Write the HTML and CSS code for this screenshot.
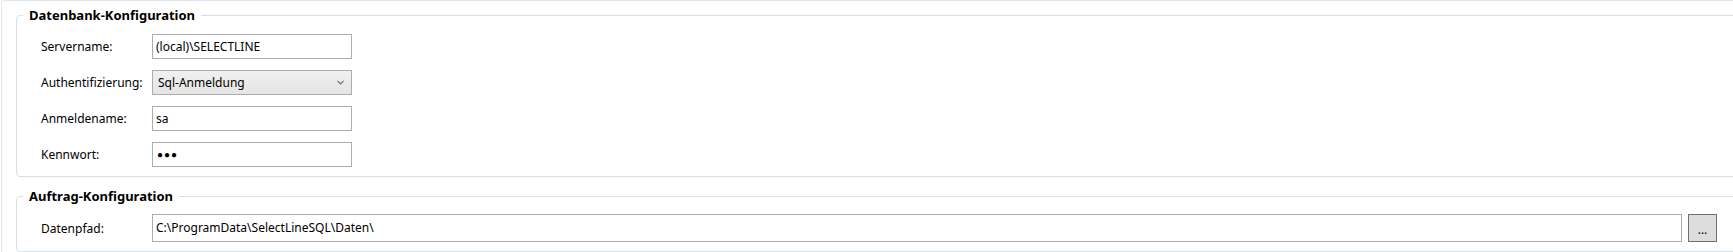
FILE: index.html
```html
<!DOCTYPE html>
<html lang="de">
<head>
    <meta charset="UTF-8">
    <title>Konfiguration</title>
    <link rel="stylesheet" href="styles.css">
</head>
<body>
<div class="frame">
    <fieldset class="group">
        <legend>Datenbank-Konfiguration</legend>
        <div class="form-grid">
            <label>Servername:</label>
            <div class="field">(local)\SELECTLINE</div>

            <label>Authentifizierung:</label>
            <div class="combo">
                <span>Sql-Anmeldung</span>
                <svg width="7" height="5" viewBox="0 0 7 5"><path d="M0.5 0.8 L3.5 3.8 L6.5 0.8" fill="none" stroke="#6a6a6a" stroke-width="1.2"/></svg>
            </div>

            <label>Anmeldename:</label>
            <div class="field">sa</div>

            <label>Kennwort:</label>
            <div class="field password">●●●</div>
        </div>
    </fieldset>

    <fieldset class="group second">
        <legend>Auftrag-Konfiguration</legend>
        <div class="path-row">
            <label>Datenpfad:</label>
            <div class="field tall">C:\ProgramData\SelectLineSQL\Daten\</div>
            <button class="browse">...</button>
        </div>
    </fieldset>
</div>
</body>
</html>
```

FILE: styles.css
```css
html, body {
    margin: 0;
    height: 100%;
    overflow: hidden;
}
body {
    font-family: "Noto Sans", "Open Sans", sans-serif;
    font-size: 12px;
    color: #000;
    background: #fff;
}
.frame {
    box-sizing: border-box;
    height: 100%;
    margin-left: 1px;
    margin-right: -20px;
    border-left: 1px solid #dfe5ec;
    border-top: 1px solid #dfe5ec;
    border-top-left-radius: 4px;
    padding: 5px 0 0 14px;
}
.group {
    margin: 0;
    border: 1px solid #d5dfe5;
    border-radius: 4px;
    padding: 0 35px 9px 24px;
    min-width: 0;
}
.group legend {
    margin-left: -18px;
    padding: 0 6px;
    font-size: 13px;
    font-weight: bold;
    line-height: 18px;
}
.second {
    margin-top: 10px;
    padding-bottom: 9px;
}
.form-grid {
    display: grid;
    grid-template-columns: 111px 200px;
    row-gap: 11px;
    padding-top: 10px;
    align-items: center;
}
.field {
    height: 23px;
    border: 1px solid #abadb3;
    padding: 0 3px;
    line-height: 23px;
    white-space: nowrap;
    overflow: hidden;
}
.password {
    font-size: 10px;
    letter-spacing: 1px;
    padding-left: 4px;
}
.combo {
    height: 23px;
    border: 1px solid #acacac;
    background: linear-gradient(#f0f0f0, #e5e5e5);
    display: flex;
    align-items: center;
    justify-content: space-between;
    padding: 0 7px 0 5px;
}
.path-row {
    display: grid;
    grid-template-columns: 105px 1fr 29px;
    column-gap: 6px;
    padding-top: 9px;
    align-items: center;
}
.tall {
    height: 26px;
    line-height: 26px;
}
.browse {
    height: 28px;
    padding: 3px 0 0;
    border: 1px solid #707070;
    background: #dddddd;
    font-family: inherit;
    font-size: 12px;
    line-height: 12px;
}
```
